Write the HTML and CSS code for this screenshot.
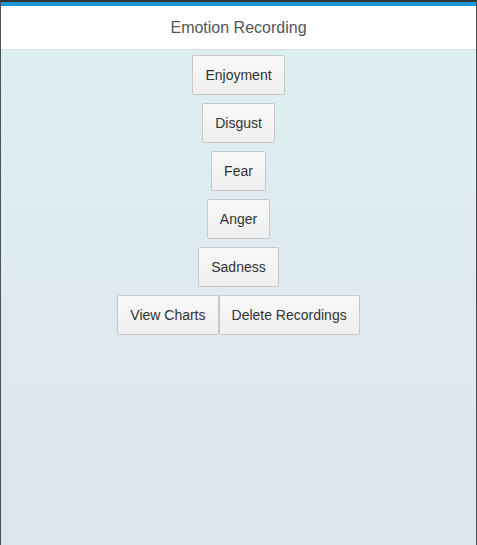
FILE: index.html
```html
<!DOCTYPE html>
<html>
<head>
<meta charset="utf-8">
<link rel="stylesheet" href="styles.css">
</head>
<body>
<div class="frame">
  <div class="topbar"></div>
  <header class="header">Emotion Recording</header>
  <main class="content">
    <div class="row"><button class="btn">Enjoyment</button></div>
    <div class="row"><button class="btn">Disgust</button></div>
    <div class="row"><button class="btn">Fear</button></div>
    <div class="row"><button class="btn">Anger</button></div>
    <div class="row"><button class="btn">Sadness</button></div>
    <div class="row"><button class="btn">View Charts</button><button class="btn">Delete Recordings</button></div>
  </main>
</div>
</body>
</html>
```
FILE: styles.css
```css
html, body {
  margin: 0;
  padding: 0;
  height: 100%;
}
body {
  font-family: "Liberation Sans", Arial, sans-serif;
}
.frame {
  height: 545px;
  box-sizing: border-box;
  border-left: 1px solid #4a4f55;
  border-right: 1px solid #4a4f55;
  border-top: 2px solid #2f3438;
  display: flex;
  flex-direction: column;
}
.topbar {
  height: 4px;
  background: #1a98d5;
}
.header {
  height: 44px;
  box-sizing: border-box;
  background: #fff;
  border-bottom: 1px solid #d8dde0;
  display: flex;
  align-items: center;
  justify-content: center;
  font-size: 16px;
  color: #555;
  padding-top: 1px;
}
.content {
  flex: 1;
  background: linear-gradient(to bottom, #ddeff1 0%, #dee4ec 100%);
  display: flex;
  flex-direction: column;
  align-items: center;
  gap: 8px;
  padding-top: 5px;
}
.row {
  display: flex;
}
.btn {
  height: 40px;
  box-sizing: border-box;
  padding: 0 12px;
  font-family: "Liberation Sans", Arial, sans-serif;
  font-size: 14px;
  color: #333;
  background: linear-gradient(to bottom, #f8f8f8, #efefef);
  border: 1px solid #c8c8c8;
  border-radius: 2px;
  margin: 0;
}
```
